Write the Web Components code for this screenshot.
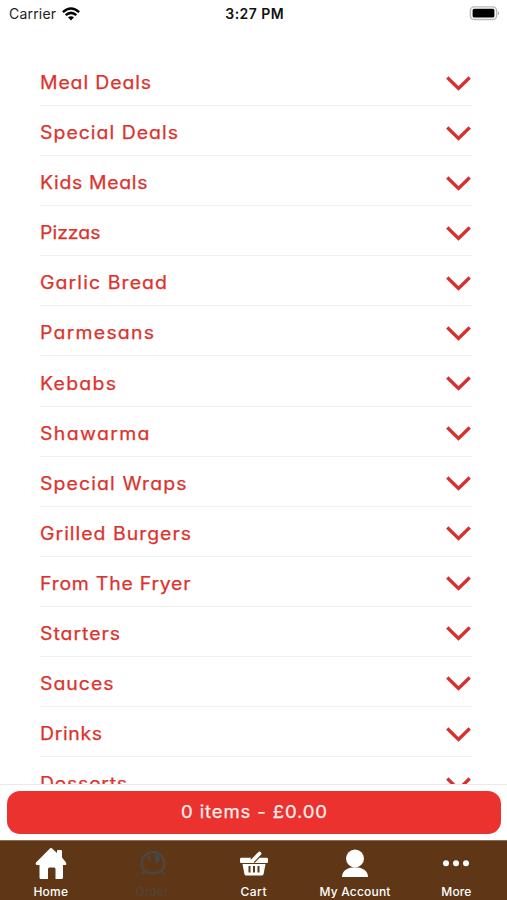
<!DOCTYPE html>
<html lang="en">
<head>
<meta charset="utf-8">
<title>Menu</title>
<style>
html, body { margin: 0; height: 100%; overflow: hidden; background: #fff; }
</style>
</head>
<body>
<menu-app></menu-app>
<script>
const define = (name, html, ready) => customElements.define(name, class extends HTMLElement {
  connectedCallback() {
    if (this.shadowRoot) return;
    const t = document.createElement('template');
    t.innerHTML = html.trim();
    this.attachShadow({ mode: 'open' }).append(t.content.cloneNode(true));
    if (ready) ready.call(this);
  }
});

/* A one-line label whose letter spacing is spread to fill its width attribute;
   the stretch attribute widens the letters themselves. */
define('spaced-text', `<style>:host{display:block;flex:none;text-align:left}span{display:inline-block;vertical-align:top;white-space:pre;transform-origin:0 50%}</style><span></span>`, function () {
  const s = this.shadowRoot.querySelector('span');
  s.textContent = this.getAttribute('text');
  const width = +this.getAttribute('width');
  const stretch = +(this.getAttribute('stretch') || 1);
  const gap = (width / stretch - s.getBoundingClientRect().width) / (s.textContent.length - 1);
  s.style.letterSpacing = gap + 'px';
  if (stretch !== 1) s.style.transform = `scaleX(${stretch})`;
  this.style.width = width + 'px';
});

define('status-bar', `
<style>
:host{display:grid;grid-template-columns:1fr auto 1fr;align-items:center;height:27px;padding:0 7px 0 9px;box-sizing:border-box;font:400 14px/27px Inter,sans-serif;color:#222;flex:none}
.left{display:flex;align-items:center;gap:6px}
.time{font-weight:600;color:#111}
svg{display:block}
.battery{justify-self:end}
</style>
<div class="left"><spaced-text text="Carrier" width="47"></spaced-text>
<svg width="18" height="14" viewBox="0 0 18 14" fill="none" stroke="#000" stroke-width="2.5"><path d="M.9 5.1Q9-2.1 17.1 5.1M3.7 8.1Q9 3.6 14.3 8.1"/><path d="M6 10.3Q9 8 12 10.3L9 13.5Z" fill="#000" stroke="none"/></svg></div>
<spaced-text class="time" text="3:27 PM" width="58.5"></spaced-text>
<svg class="battery" width="31" height="16" viewBox="0 0 31 16"><rect x="1.4" y=".9" width="26.2" height="12.6" rx="3.8" fill="#fff" stroke="#b9b9b9" stroke-width="1.4"/><rect x="3.6" y="2.8" width="21.8" height="8.8" rx="1.6"/><path d="M28.9 5.2Q31.2 7.2 28.9 9.4Z" fill="#aaa"/></svg>`);

define('menu-row', `
<style>
:host{display:flex;justify-content:space-between;align-items:center;height:50.08px;box-sizing:border-box;border-bottom:1.6px solid #f1f1f1;padding:4px 0 0 0;font:400 18px/29px Inter,sans-serif;font-feature-settings:"cv11";-webkit-text-stroke:.25px #dc332d;color:#dc332d;flex:none}
svg{display:block}
</style>
<slot></slot>
<svg width="26" height="18" viewBox="0 0 26 18" fill="none" stroke="#d9302d" stroke-width="3.3"><path d="M1.3 3.5 12.5 14.5 23.7 3.5"/></svg>`);

define('menu-list', `
<style>:host{display:flex;flex-direction:column;flex:1;min-height:0;overflow:hidden;padding:29px 35px 0 40px}</style><slot></slot>`);

define('basket-bar', `
<style>
:host{display:block;height:56px;box-sizing:border-box;padding:6px 6px 6px 7px;border-top:1.5px solid #e9e9e9;background:#fff;flex:none}
button{display:flex;width:100%;height:42.5px;align-items:center;justify-content:center;border:0;border-radius:13px;margin:0;padding:0;background:#eb322f;color:#fff0ee;font:400 17.5px/28px Inter,sans-serif;-webkit-text-stroke:.25px #fff0ee}
</style>
<button><spaced-text text="0 items - £0.00" width="146" stretch="1.06"></spaced-text></button>`);

define('tab-bar', `
<style>
:host{display:flex;height:60px;background:#5f3716;border-top:1px solid #8b6d51;box-sizing:border-box;flex:none}
.tab{display:flex;flex-direction:column;align-items:center;justify-content:space-between;flex:1;padding:6px 0 0;color:#fff;font:500 12px/17px Inter,sans-serif}
.dim{color:#514338}
svg{display:block}
</style>
<div class="tab"><svg width="34" height="34" viewBox="0 0 34 34" fill="#fff"><path d="M16.2 1.3Q17 .6 17.8 1.3L23 6V4Q23 3 24 3H27Q28 3 28 4V10.5L32 15.4Q33 18 31 18H29V30.4Q29 32 27.4 32H21.5V22Q21.5 20.5 20 20.5H15.5Q14 20.5 14 22V32H7Q5.5 32 5.5 30.4V18H3Q1 17.8 2 15.6Z"/></svg><spaced-text text="Home" width="34.5"></spaced-text></div>
<div class="tab dim"><svg width="30" height="34" viewBox="-1 0 30 34" fill="none" stroke="#4d4640" stroke-width="2.6"><path d="M6 23.5A11.4 11.4 0 1 1 24 23.5M7 23l-3 4M23 23l3 4M7 24Q15 29 23 24M10 9l2 5"/><path d="M16 8Q22 6 22 13L18 17Z" fill="#42474a" stroke="none"/></svg><spaced-text text="Order" width="33"></spaced-text></div>
<div class="tab"><svg width="30" height="34" viewBox="0 0 30 34"><path d="M2 10.8H28Q29 10.8 29 12.3V14.8Q29 16 27.6 16H2.4Q1 16 1 14.8V12.3Q1 10.8 2 10.8ZM3.5 17H26.5L24.6 27Q24.2 28.6 22.6 28.6H7.4Q5.8 28.6 5.4 27Z" fill="#fff"/><path d="M10.5 19v6.5M15 19v6.5M19.5 19v6.5" stroke="#5f3716" stroke-width="2"/><path d="M13.5 13.8 20.5 6.5" stroke="#5f3716" stroke-width="6"/><path d="M13.5 13.8 20.5 6.5" stroke="#fff" stroke-width="3.8" stroke-linecap="round"/></svg><spaced-text text="Cart" width="26"></spaced-text></div>
<div class="tab"><svg width="30" height="34" viewBox="0 0 30 34" fill="#fff"><circle cx="15" cy="11.5" r="9"/><path d="M2 30C2 23.5 8 20.2 15 20.2s13 3.3 13 9.8Z"/></svg><spaced-text text="My Account" width="71"></spaced-text></div>
<div class="tab"><svg width="30" height="34" viewBox="0 0 30 34" fill="#fff"><circle cx="5" cy="16.3" r="3"/><circle cx="15" cy="16.3" r="3"/><circle cx="25" cy="16.3" r="3"/></svg><spaced-text text="More" width="30"></spaced-text></div>`);

const items = [['Meal Deals',111],['Special Deals',138],['Kids Meals',107.5],['Pizzas',60.5],['Garlic Bread',127],['Parmesans',114],['Kebabs',76],['Shawarma',109.5],['Special Wraps',146.5],['Grilled Burgers',151],['From The Fryer',150.5],['Starters',80],['Sauces',73.5],['Drinks',62],['Desserts',87]];
define('menu-app', `
<style>:host{display:flex;flex-direction:column;height:100vh;background:#fff;overflow:hidden}</style>
<status-bar></status-bar>
<menu-list>${items.map(([t, w]) => `<menu-row><spaced-text text="${t}" width="${w}" stretch="1.08"></spaced-text></menu-row>`).join('')}</menu-list>
<basket-bar></basket-bar>
<tab-bar></tab-bar>`);
</script>
</body>
</html>
